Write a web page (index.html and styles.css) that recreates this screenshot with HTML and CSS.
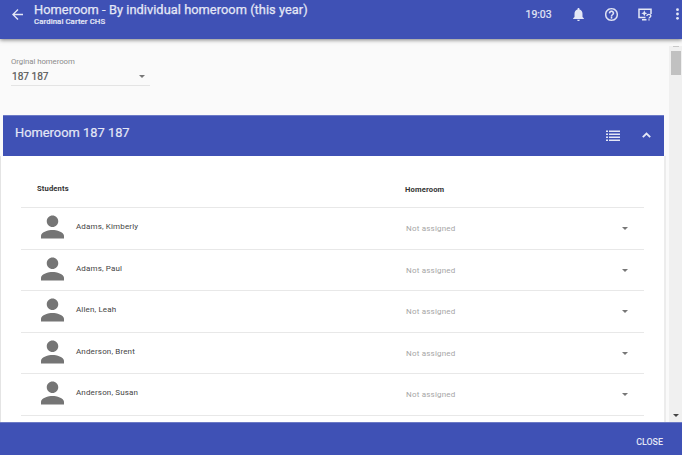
FILE: index.html
```html
<!DOCTYPE html>
<html lang="en">
<head>
<meta charset="utf-8">
<title>Homeroom - By individual homeroom</title>
<link rel="stylesheet" href="styles.css">
</head>
<body>
<header class="topbar">
  <svg class="back" viewBox="4 4 16 16"><path d="M20 11H7.83l5.59-5.59L12 4l-8 8 8 8 1.41-1.41L7.83 13H20v-2z"/></svg>
  <div class="titles">
    <h1>Homeroom - By individual homeroom (this year)</h1>
    <p>Cardinal Carter CHS</p>
  </div>
  <span class="clock">19:03</span>
  <svg class="bell" viewBox="4 2.5 16 19.5"><path d="M12 22c1.1 0 2-.9 2-2h-4c0 1.1.89 2 2 2zm6-6v-5c0-3.07-1.64-5.64-4.5-6.32V4c0-.83-.67-1.5-1.5-1.5s-1.5.67-1.5 1.5v.68C7.63 5.36 6 7.92 6 11v5l-2 2v1h16v-1l-2-2z"/></svg>
  <svg class="help" viewBox="2 2 20 20"><path stroke="currentColor" stroke-width=".4" d="M11 18h2v-2h-2v2zm1-16C6.48 2 2 6.48 2 12s4.48 10 10 10 10-4.48 10-10S17.520 2 12 2zm0 18c-4.410 0-8-3.590-8-8s3.590-8 8-8 8 3.590 8 8-3.590 8-8 8zm0-14c-2.210 0-4 1.790-4 4h2c0-1.100.9-2 2-2s2 .9 2 2c0 2-3 1.750-3 5h2c0-2.250 3-2.500 3-5 0-2.210-1.790-4-4-4z"/></svg>
  <svg class="screen" viewBox="0 0 14 13"><path d="M13 6V1.200H1v8.300h6.500M4 11.800h4.500" fill="none" stroke="currentColor" stroke-width="1.500"/><path d="M6.300 2.300l.9 2.100 2.100.9-2.100.9-.9 2.100-.9-2.100-2.100-.9 2.100-.9z"/><path d="M8.900 8c0-2.300 3.900-2.300 3.900 0 0 1.300-1.800 1.300-1.800 2.600M11 11.300v1.300" fill="none" stroke="currentColor" stroke-width="1.300"/></svg>
  <svg class="more" viewBox="0 0 3 12"><circle cx="1.500" cy="1.700" r="1.400"/><circle cx="1.500" cy="6" r="1.400"/><circle cx="1.500" cy="10.300" r="1.400"/></svg>
</header>
<main>
  <div class="content">
    <div class="field">
      <label>Orginal homeroom</label>
      <div class="select"><span>187 187</span><i class="caret"></i></div>
    </div>
    <section class="card">
      <div class="card-head">
        <h2>Homeroom 187 187</h2>
        <svg class="list" viewBox="0 0 14 12"><path d="M0 .5h2v1.500H0zM3 .5h11v1.500H3zM0 3.500h2v1.500H0zM3 3.500h11v1.500H3zM0 6.500h2v1.500H0zM3 6.500h11v1.500H3zM0 9.500h2v1.500H0zM3 9.500h11v1.500H3z"/></svg>
        <svg class="up" viewBox="0 0 9 6"><path d="M.8 5.200l3.700-3.700 3.700 3.700" fill="none" stroke="currentColor" stroke-width="1.800"/></svg>
      </div>
      <div class="table">
        <div class="row head"><b>Students</b><b class="col">Homeroom</b></div>
        <div class="row"><svg class="person" viewBox="4 4 16 16"><path d="M12 12c2.210 0 4-1.790 4-4s-1.790-4-4-4-4 1.790-4 4 1.790 4 4 4zm0 2c-2.670 0-8 1.340-8 4v2h16v-2c0-2.660-5.330-4-8-4z"/></svg><span class="name">Adams, Kimberly</span><span class="na">Not assigned</span><i class="caret small"></i></div>
        <div class="row"><svg class="person" viewBox="4 4 16 16"><path d="M12 12c2.210 0 4-1.790 4-4s-1.790-4-4-4-4 1.790-4 4 1.790 4 4 4zm0 2c-2.670 0-8 1.340-8 4v2h16v-2c0-2.660-5.330-4-8-4z"/></svg><span class="name">Adams, Paul</span><span class="na">Not assigned</span><i class="caret small"></i></div>
        <div class="row"><svg class="person" viewBox="4 4 16 16"><path d="M12 12c2.210 0 4-1.790 4-4s-1.790-4-4-4-4 1.790-4 4 1.790 4 4 4zm0 2c-2.670 0-8 1.340-8 4v2h16v-2c0-2.660-5.330-4-8-4z"/></svg><span class="name">Allen, Leah</span><span class="na">Not assigned</span><i class="caret small"></i></div>
        <div class="row"><svg class="person" viewBox="4 4 16 16"><path d="M12 12c2.210 0 4-1.790 4-4s-1.790-4-4-4-4 1.790-4 4 1.790 4 4 4zm0 2c-2.670 0-8 1.340-8 4v2h16v-2c0-2.660-5.330-4-8-4z"/></svg><span class="name">Anderson, Brent</span><span class="na">Not assigned</span><i class="caret small"></i></div>
        <div class="row"><svg class="person" viewBox="4 4 16 16"><path d="M12 12c2.210 0 4-1.790 4-4s-1.790-4-4-4-4 1.790-4 4 1.790 4 4 4zm0 2c-2.670 0-8 1.340-8 4v2h16v-2c0-2.660-5.330-4-8-4z"/></svg><span class="name">Anderson, Susan</span><span class="na">Not assigned</span><i class="caret small"></i></div>
      </div>
    </section>
  </div>
  <div class="scrollbar"><i class="tick"></i><i class="thumb"></i><i class="caret down"></i></div>
</main>
<footer><span>CLOSE</span></footer>
</body>
</html>
```
FILE: styles.css
```css
* { box-sizing: border-box; margin: 0; padding: 0; }
body {
  width: 682px; height: 455px; overflow: hidden;
  display: flex; flex-direction: column;
  font-family: Roboto, "Liberation Sans", sans-serif;
  background: #fafafa; color: #444;
}
svg { display: block; flex: none; fill: currentColor; }
.topbar {
  height: 39px; flex: none; display: flex; align-items: flex-start;
  padding-left: 12px; background: #3f51b5; color: #e4e7f6;
  box-shadow: 0 1px 4px rgba(0,0,0,.5); position: relative; z-index: 1;
}
.back { width: 11px; height: 11px; margin-top: 9px; }
.titles { margin-left: 11px; width: 491.500px; white-space: nowrap; }
h1 { font-size: 12.800px; line-height: 15px; font-weight: 400; letter-spacing: .05px; margin-top: 2px; -webkit-text-stroke: .25px; }
.titles p { font-size: 7.800px; line-height: 9px; font-weight: 500; letter-spacing: .07px; -webkit-text-stroke: .15px; }
.clock { width: 47.500px; font-size: 10.500px; line-height: 12px; margin-top: 9px; -webkit-text-stroke: .2px; }
.bell { width: 11px; height: 13px; margin-top: 8px; }
.help { width: 13px; height: 13px; margin: 8px 0 0 21px; }
.screen { width: 14px; height: 13px; margin: 8px 0 0 20px; }
.more { width: 3px; height: 12px; margin: 8px 0 0 24px; }
main { flex: 1; display: flex; min-height: 0; }
.content { width: 669px; overflow: hidden; }
.field { width: 139px; margin: 18px 0 0 11px; height: 58px; }
.field label { display: block; font-size: 7.800px; line-height: 10px; letter-spacing: -.05px; color: #8c8c8c; }
.select { height: 19px; display: flex; align-items: center; justify-content: space-between; padding: 1px 5px 0 1px; border-bottom: 1px solid #e4e4e4; font-size: 10.100px; color: #555; -webkit-text-stroke: .2px; }
.caret { flex: none; border: 3px solid transparent; border-top-color: #777; border-bottom: 0; }
.card { width: 666px; height: 340px; }
.card-head { height: 41px; margin: 0 2px 0 3px; background: #3f51b5; border-top: 1px solid #6c7ac6; color: #e4e7f6; display: flex; }
h2 { flex: 1; font-size: 12.800px; line-height: 15px; font-weight: 400; letter-spacing: .04px; margin: 9px 0 0 12px; -webkit-text-stroke: .2px; }
.list { width: 14px; height: 12px; margin-top: 14px; }
.up { width: 9px; height: 6px; margin: 16px 13px 0 22px; }
.table { height: 300px; background: #fff; border-left: 1px solid #e4e4e4; border-right: 2px solid #ececec; padding: 0 20px; }
.row { height: 41.600px; border-bottom: 1px solid #e8e8e8; display: flex; align-items: flex-start; font-size: 8px; line-height: 10px; letter-spacing: .15px; color: #444; }
.head { height: 52px; font-size: 7.600px; color: #333; padding: 28px 0 0 16px; }
.head b { width: 368px; flex: none; }
.head .col { margin-top: 1px; }
.person { width: 23px; height: 24px; margin: 7px 0 0 20px; color: #757575; }
.name { width: 330px; margin: 14px 0 0 12px; }
.na { width: 216px; margin-top: 16px; color: #a6a6a6; letter-spacing: .2px; }
.small { margin-top: 19px; }
.scrollbar { width: 13px; margin-top: 7px; background: #f0f0f0; display: flex; flex-direction: column; align-items: center; }
.tick { width: 6px; height: 1px; background: #c8c8c8; flex: none; }
.thumb { width: 10px; height: 24px; margin-top: 4px; background: #c1c1c1; flex: none; }
.down { margin: auto 0 5px; border-top-color: #444; }
footer { height: 33px; flex: none; background: #3f51b5; color: #e4e7f6; border-top: 1px solid #6c7ac6; display: flex; justify-content: flex-end; padding: 14px 19px 0 0; font-size: 8.900px; line-height: 11px; font-weight: 500; }
```
